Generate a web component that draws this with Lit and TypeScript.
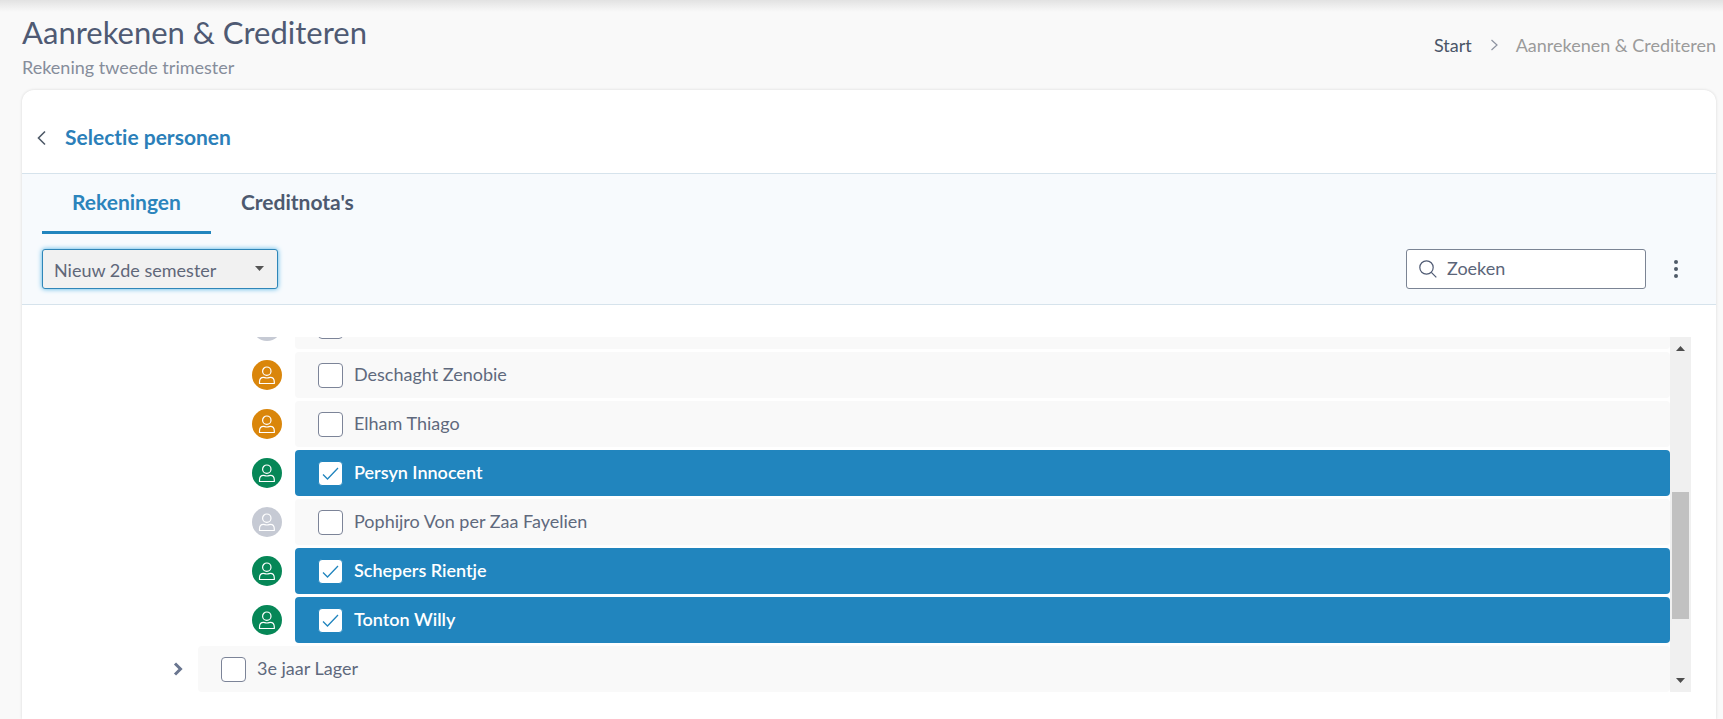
import { LitElement, html, css, svg, nothing } from "lit";
import { customElement, property, state } from "lit/decorators.js";
import { classMap } from "lit/directives/class-map.js";

type Status = "none" | "orange" | "green" | "grey";

interface Entry {
  name: string;
  status: Status;
  checked: boolean;
  group?: boolean;
}

const personIcon = svg`
  <circle cx="14.800" cy="11.200" r="4.200"></circle>
  <path d="M7.500 23.500v-1.500c0-2.800 1.600-4.700 4-4.700.9 0 1.700.7 3.400.7s2.500-.7 3.400-.7c2.400 0 4 1.900 4 4.700v1.500z"></path>
`;

@customElement("tree-row")
class TreeRow extends LitElement {
  @property({ attribute: false }) entry!: Entry;
  @property() rowId = "";

  static styles = css`
    :host {
      display: flex;
      flex: none;
      align-items: center;
      height: 46px;
    }
    .lead {
      box-sizing: border-box;
      flex: none;
      display: flex;
      align-items: center;
      justify-content: flex-end;
      width: 253px;
      padding-right: 13px;
    }
    .lead.group {
      width: 156px;
      padding-right: 12px;
    }
    .avatar {
      width: 30px;
      height: 30px;
      border-radius: 50%;
      fill: none;
      stroke: #fff;
      stroke-width: 1.2;
      stroke-linejoin: round;
    }
    .orange { background: #da860b; }
    .green { background: #068757; }
    .grey { background: #c6cad4; }
    .toggle {
      display: flex;
      padding: 2px;
      border: 0;
      background: none;
    }
    .toggle svg {
      width: 12px;
      height: 14px;
      fill: none;
      stroke: #6a7690;
      stroke-width: 3;
    }
    .body {
      flex: 1;
      display: flex;
      align-items: center;
      gap: 11px;
      height: 46px;
      padding-left: 23px;
      border-radius: 4px;
      background: #f9f9f9;
      color: #5f697d;
      font-size: 18px;
      line-height: 24px;
    }
    .body label {
      padding-bottom: 2px;
    }
    .body.checked {
      background: #2185be;
      color: #fff;
      font-weight: 600;
    }
    .box {
      appearance: none;
      box-sizing: border-box;
      flex: none;
      width: 25px;
      height: 25px;
      margin: 0;
      border: 1px solid #7c8498;
      border-radius: 4px;
      background: #fff;
    }
    .box:checked {
      border-color: #2185be;
      background: #fff url("data:image/svg+xml,%3Csvg xmlns='http://www.w3.org/2000/svg' viewBox='0 0 23 23'%3E%3Cpath d='M4 12.5l4.500 4.500L19 6' fill='none' stroke='%232185be' stroke-width='1.300'/%3E%3C/svg%3E") center / 23px 23px no-repeat;
    }
  `;

  render() {
    const { name, status, checked, group } = this.entry;
    return html`
      <div class=${classMap({ lead: true, group: !!group })}>
        ${group
          ? html`<button class="toggle" aria-expanded="false" aria-label=${name}>
              <svg viewBox="0 0 12 14"><path d="M3 1.500l5.500 5.500L3 12.500"></path></svg>
            </button>`
          : html`<svg class="avatar ${status}" viewBox="0 0 30 30">${personIcon}</svg>`}
      </div>
      <div class=${classMap({ body: true, checked })}>
        <input class="box" type="checkbox" id=${this.rowId} .checked=${checked}
          @change=${() => this.dispatchEvent(new CustomEvent("toggle-entry"))} />
        ${name ? html`<label for=${this.rowId}>${name}</label>` : nothing}
      </div>
    `;
  }
}

@customElement("app-root")
class AppRoot extends LitElement {
  @state() private entries: Entry[] = [
    { name: "", status: "grey", checked: false },
    { name: "Deschaght Zenobie", status: "orange", checked: false },
    { name: "Elham Thiago", status: "orange", checked: false },
    { name: "Persyn Innocent", status: "green", checked: true },
    { name: "Pophijro Von per Zaa Fayelien", status: "grey", checked: false },
    { name: "Schepers Rientje", status: "green", checked: true },
    { name: "Tonton Willy", status: "green", checked: true },
    { name: "3e jaar Lager", status: "none", checked: false, group: true },
  ];

  static styles = css`
    :host {
      box-sizing: border-box;
      display: flex;
      flex-direction: column;
      height: 100vh;
      min-height: 480px;
      padding: 0 7px 0 22px;
      overflow: hidden;
      background: linear-gradient(#e2e2e2, #f9f9f9 12px);
      color: #4f5a73;
      font-family: Lato, "Open Sans", sans-serif;
      font-size: 18px;
      font-variant-ligatures: none;
      line-height: 24px;
    }
    .top {
      flex: none;
      display: flex;
      justify-content: space-between;
      align-items: center;
      height: 90px;
    }
    h1 {
      margin: 0;
      padding-top: 4px;
      font-size: 31px;
      line-height: 40px;
      font-weight: 400;
    }
    .subtitle {
      margin: 0;
      line-height: 30px;
      color: #868d9b;
    }
    .crumbs {
      display: flex;
      align-items: center;
      gap: 17px;
      color: #9b9b9b;
    }
    .crumbs a {
      color: #4a5568;
      text-decoration: none;
    }
    .crumbs svg {
      width: 10px;
      height: 12px;
      fill: none;
      stroke: #8d93a0;
      stroke-width: 1.2;
    }
    .card {
      flex: 1;
      min-height: 0;
      display: flex;
      flex-direction: column;
      border-radius: 12px 12px 0 0;
      background: #fff;
      box-shadow: 0 0 3px rgba(0, 0, 0, 0.14);
    }
    .card-head {
      flex: none;
      box-sizing: border-box;
      display: flex;
      align-items: center;
      gap: 19px;
      height: 83px;
      padding: 12px 15px 0;
    }
    h2 {
      margin: 0;
      padding-bottom: 2px;
      font-size: 21px;
      line-height: 24px;
      font-weight: 700;
      color: #2b7fb9;
    }
    .back {
      display: flex;
      padding: 0;
      border: 0;
      background: none;
    }
    .back svg {
      width: 9px;
      height: 16px;
      fill: none;
      stroke: #4f5a68;
      stroke-width: 1.6;
    }
    .panel {
      flex: none;
      padding: 0 20px 15px;
      border-top: 1px solid #d6e3ec;
      border-bottom: 1px solid #d6e3ec;
      background: #f7fafd;
    }
    .tabs {
      display: flex;
    }
    .tab {
      padding: 15px 30px 16px;
      border: 0;
      border-bottom: 3px solid transparent;
      background: none;
      color: #4d596f;
      font-family: inherit;
      font-size: 21px;
      font-weight: 700;
      line-height: 26px;
    }
    .tab.active {
      border-color: #2185be;
      color: #2b84bc;
    }
    .tools {
      display: flex;
      justify-content: space-between;
      padding-top: 15px;
    }
    .select {
      display: grid;
      width: 236px;
    }
    .select > * {
      grid-area: 1 / 1;
    }
    select {
      appearance: none;
      box-sizing: border-box;
      width: 100%;
      height: 40px;
      padding: 2px 36px 0 11px;
      border: 1px solid #2f86b8;
      border-radius: 3px;
      background: #f1f1f1;
      box-shadow: 0 0 5px #4fb4e6;
      color: #5f6779;
      font: inherit;
    }
    .caret {
      justify-self: end;
      align-self: center;
      width: 9px;
      height: 5px;
      margin: 0 14px 2px 0;
      fill: #555;
      pointer-events: none;
    }
    .right {
      display: flex;
      align-items: center;
      gap: 25px;
      padding-right: 15px;
    }
    .search {
      box-sizing: border-box;
      display: flex;
      align-items: center;
      gap: 10px;
      width: 240px;
      height: 40px;
      padding: 0 12px;
      border: 1px solid #7b8494;
      border-radius: 3px;
      background: #fff;
    }
    .search svg {
      flex: none;
      width: 18px;
      height: 18px;
      fill: none;
      stroke: #4f5a73;
      stroke-width: 1.2;
    }
    .search input {
      min-width: 0;
      width: 100%;
      padding: 0 0 3px;
      border: 0;
      outline: 0;
      background: none;
      font: inherit;
      color: inherit;
    }
    .search input::placeholder {
      color: #5b6579;
      opacity: 1;
    }
    .more {
      display: flex;
      padding: 0;
      border: 0;
      background: none;
    }
    .more svg {
      width: 10px;
      height: 20px;
      fill: #4f5a68;
    }
    .scroller {
      flex: 1;
      min-height: 0;
      display: flex;
      margin: 32px 25px 27px 20px;
    }
    .list {
      flex: 1;
      min-width: 0;
      display: flex;
      flex-direction: column;
      justify-content: flex-end;
      gap: 3px;
      overflow: hidden;
    }
    .bar {
      box-sizing: border-box;
      flex: none;
      display: flex;
      flex-direction: column;
      align-items: center;
      width: 21px;
      padding: 9px 2px;
      background: #f0f0f0;
    }
    .bar svg {
      flex: none;
      width: 9px;
      height: 5px;
      fill: #4d4d4d;
    }
    .track {
      flex: 1;
      display: flex;
      flex-direction: column;
      width: 17px;
    }
    .before { flex: 141; }
    .thumb {
      flex: 127;
      background: #c1c1c1;
    }
    .after { flex: 59; }
  `;

  private toggle(index: number) {
    this.entries = this.entries.map((e, i) => (i === index ? { ...e, checked: !e.checked } : e));
  }

  render() {
    return html`
      <header class="top">
        <div>
          <h1>Aanrekenen &amp; Crediteren</h1>
          <p class="subtitle">Rekening tweede trimester</p>
        </div>
        <nav class="crumbs">
          <a href="#">Start</a>
          <svg viewBox="0 0 10 12"><path d="M2.500 1l5.500 5-5.500 5"></path></svg>
          <span>Aanrekenen &amp; Crediteren</span>
        </nav>
      </header>
      <main class="card">
        <div class="card-head">
          <button class="back" aria-label="Start">
            <svg viewBox="0 0 9 16"><path d="M8 1.500L1.500 8 8 14.500"></path></svg>
          </button>
          <h2>Selectie personen</h2>
        </div>
        <section class="panel">
          <div class="tabs" role="tablist">
            <button class="tab active" role="tab" aria-selected="true">Rekeningen</button>
            <button class="tab" role="tab" aria-selected="false">Creditnota's</button>
          </div>
          <div class="tools">
            <label class="select">
              <select>
                <option>Nieuw 2de semester</option>
              </select>
              <svg class="caret" viewBox="0 0 9 5"><path d="M0 0h9L4.500 5z"></path></svg>
            </label>
            <div class="right">
              <label class="search">
                <svg viewBox="0 0 18 18"><circle cx="7.500" cy="7.500" r="6.700"></circle><path d="M12.300 12.300l5 5"></path></svg>
                <input type="search" placeholder="Zoeken" />
              </label>
              <button class="more">
                <svg viewBox="0 0 10 20">
                  <circle cx="5" cy="3" r="2"></circle>
                  <circle cx="5" cy="10" r="2"></circle>
                  <circle cx="5" cy="17" r="2"></circle>
                </svg>
              </button>
            </div>
          </div>
        </section>
        <section class="scroller">
          <div class="list">
            ${this.entries.map(
              (entry, i) => html`<tree-row .entry=${entry} .rowId=${`entry-${i}`}
                @toggle-entry=${() => this.toggle(i)}></tree-row>`
            )}
          </div>
          <div class="bar" aria-hidden="true">
            <svg viewBox="0 0 9 5"><path d="M0 5h9L4.500 0z"></path></svg>
            <div class="track">
              <div class="before"></div>
              <div class="thumb"></div>
              <div class="after"></div>
            </div>
            <svg viewBox="0 0 9 5"><path d="M0 0h9L4.500 5z"></path></svg>
          </div>
        </section>
      </main>
    `;
  }
}
